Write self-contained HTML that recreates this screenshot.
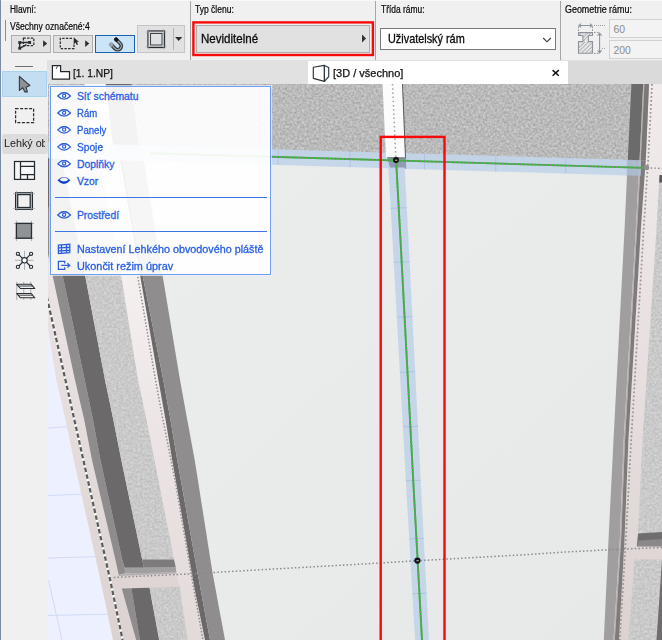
<!DOCTYPE html>
<html lang="cs">
<head>
<meta charset="utf-8">
<title>Lehký obvodový plášť – Typ členu</title>
<style>
html,body{margin:0;padding:0}
body{width:662px;height:640px;overflow:hidden;position:relative;background:#f0f0f0;font-family:"Liberation Sans",sans-serif;color:#1a1a1a}
.abs{position:absolute}
.t{position:absolute;white-space:nowrap;line-height:1;transform-origin:0 0}
.lbl{font-size:10px;color:#0a0a0a;-webkit-text-stroke:.22px #0a0a0a}
.sep{position:absolute;top:1px;height:59px;width:1px;background:#a6a6a6}
.btn{position:absolute;box-sizing:border-box;border:1px solid #adadad;background:#e1e1e1}
.pop{font-size:10.4px;color:#2a60e4;-webkit-text-stroke:.3px #2a60e4}
.tab{font-size:10.8px;color:#111;-webkit-text-stroke:.25px #111}
svg{position:absolute;overflow:visible}
</style>
</head>
<body>
<!-- ===== top info panel ===== -->
<div class="abs" id="panel" style="left:0;top:0;width:662px;height:60px;background:#f0f0f0"></div>
<div class="abs" style="left:0;top:0;width:662px;height:1px;background:#f8f8f8"></div>
<div class="abs" style="left:5px;top:20px;width:1px;height:21px;background:#8c8c8c"></div>

<span class="t lbl" style="left:10.3px;top:4.9px;transform:scaleX(0.834)">Hlavní:</span>
<span class="t lbl" style="left:10.3px;top:21.6px;transform:scaleX(0.858)">Všechny označené:4</span>

<div class="btn" style="left:11px;top:35px;width:40px;height:18px"></div>
<div class="btn" style="left:53px;top:35px;width:40px;height:18px"></div>
<div class="btn" style="left:95px;top:35px;width:40px;height:18px;border-color:#1b62b3;background:#cce4f7"></div>
<div class="btn" style="left:137px;top:25px;width:48px;height:28px;border-color:#c4c4c4"></div>
<div class="abs" style="left:173px;top:28px;width:1px;height:22px;background:#b4b4b4"></div>

<div class="sep" style="left:190px"></div>
<span class="t lbl" style="left:195.3px;top:4.9px;transform:scaleX(0.852)">Typ členu:</span>
<svg style="left:0;top:0" width="662" height="60" viewBox="0 0 662 60"><rect x="193.4" y="22.4" width="179.5" height="32.6" fill="none" stroke="#f80a0c" stroke-width="2.4"/></svg>
<div class="btn" style="left:196px;top:25px;width:174px;height:28px"></div>
<span class="t" style="left:200.5px;top:33.5px;font-size:11.9px;color:#0c0c0c;-webkit-text-stroke:.3px #0c0c0c;transform:scaleX(.971)">Neviditelné</span>

<div class="sep" style="left:375px"></div>
<span class="t lbl" style="left:380.5px;top:4.9px;transform:scaleX(0.843)">Třída rámu:</span>
<div class="abs" style="left:380px;top:28px;width:176px;height:22px;box-sizing:border-box;border:1px solid #7a7a7a;background:#fff"></div>
<span class="t" style="left:387.7px;top:33.5px;font-size:11.9px;color:#0c0c0c;-webkit-text-stroke:.3px #0c0c0c;transform:scaleX(.914)">Uživatelský rám</span>

<div class="sep" style="left:560px"></div>
<span class="t lbl" style="left:565.3px;top:4.9px;transform:scaleX(0.892)">Geometrie rámu:</span>
<div class="abs" style="left:609px;top:19px;width:60px;height:19px;box-sizing:border-box;border:1px solid #d2d2d2;background:#f3f3f3"></div>
<div class="abs" style="left:609px;top:40px;width:60px;height:19px;box-sizing:border-box;border:1px solid #d2d2d2;background:#f3f3f3"></div>
<span class="t" style="left:613.5px;top:25px;font-size:10.4px;color:#8a8a8a">60</span>
<span class="t" style="left:613.5px;top:45.9px;font-size:10.4px;color:#8a8a8a">200</span>

<!-- ===== tab bar ===== -->
<div class="abs" style="left:47px;top:60px;width:615px;height:24px;background:#e1e1e1"></div>
<div class="abs" style="left:568px;top:61px;width:94px;height:23px;background:#dadada"></div>
<div class="abs" style="left:308px;top:61px;width:260px;height:23px;background:#fff"></div>
<span class="t tab" style="left:72.6px;top:68.1px;transform:scaleX(.95)">[1. 1.NP]</span>
<span class="t tab" style="left:332.9px;top:68px;transform:scaleX(1.02)">[3D / všechno]</span>

<!-- ===== left toolbox ===== -->
<div class="abs" style="left:0;top:60px;width:47px;height:580px;background:#f0f0f0"></div>
<div class="abs" style="left:0;top:0;width:1px;height:640px;background:#7b8da6"></div>
<div class="abs" style="left:15px;top:66px;width:18px;height:1px;background:#6e6e6e"></div>
<div class="abs" style="left:2px;top:71px;width:45px;height:26px;box-sizing:border-box;background:#c3ddf3;border:1px solid #a9d1f0"></div>
<div class="abs" style="left:2px;top:134px;width:46px;height:20px;background:#dcdcdc;border-radius:3px"></div>
<div class="abs" style="left:2px;top:134px;width:43px;height:20px;overflow:hidden"><span class="t" style="left:1.6px;top:4.4px;font-size:11px;color:#1a1a1a;transform:scaleX(.976)">Lehký obvodový plášť</span></div>

<!-- ===== chrome icons ===== -->
<svg id="icons" style="left:0;top:0" width="662" height="640" viewBox="0 0 662 640">
<!-- button 1: polyline with dashed marquee -->
<g fill="none" stroke="#2b2f33">
<rect x="23.4" y="38.1" width="10.4" height="7.4" stroke-width="1.25" stroke-dasharray="2.4 1.3"/>
<path d="M19.7 48.3V42.5H29.7M19.7 48.3L26.6 44.6" stroke-width="1.4"/>
</g>
<g fill="#2b2f33"><rect x="18.3" y="41.1" width="2.9" height="2.9"/><rect x="28.2" y="41" width="2.9" height="2.9"/><rect x="18.3" y="46.8" width="2.9" height="2.9"/>
<path d="M43.1 40.2V47L47.2 43.6Z"/>
<path d="M85.2 40.2V47L89.3 43.6Z"/>
<path d="M73.7 37.3V44.2L75.6 42.7L76.8 45L78.1 44.4L77 42.1L79 41.9Z"/>
</g>
<!-- button 2: marquee + cursor -->
<path d="M72 38.4H60.3V48.5H74V44.5" fill="none" stroke="#2b2f33" stroke-width="1.25" stroke-dasharray="2.4 1.3"/>
<!-- button 3: magnet -->
<g transform="translate(116.4 44.8) rotate(-45) scale(1.1)">
<path d="M-3.3 -4.4V1.6A3.3 3.3 0 0 0 3.3 1.6V-4.4" fill="none" stroke="#363b40" stroke-width="3.4"/>
<path d="M-3.3 -1.6V1.6A3.3 3.3 0 0 0 3.3 1.6V-1.6" fill="none" stroke="#a9b9c7" stroke-width="1"/>
<rect x="-5" y="-5.4" width="3.4" height="3.8" rx="1" fill="#a0a4a8"/>
<rect x="1.6" y="-5.4" width="3.4" height="3.8" rx="1" fill="#14171a"/>
</g>
<!-- big button: frame icon + dropdown -->
<g fill="none" stroke="#20262b">
<rect x="148" y="31" width="16.5" height="16.5" stroke-width="1.25"/><rect x="150.6" y="33.5" width="11.4" height="11.5" stroke-width="0.85"/>
</g>
<path d="M148.6 28.9V49.6M163.7 28.9V49.6M145.6 32H166.6M145.6 46.6H166.6" stroke="#a4a8ab" stroke-width="0.6" fill="none"/>
<path d="M175.1 37.1H182.3L178.7 41Z" fill="#2b2f33"/>
<!-- Neviditelné arrow, combo chevron -->
<path d="M362 34.5V42.4L366.1 38.45Z" fill="#333"/>
<path d="M543.2 38L547 41.8L550.8 38" fill="none" stroke="#3a3a3a" stroke-width="1.15"/>
<!-- geometry icon -->
<g fill="none" stroke="#8e9499" stroke-width="1">
<path d="M579.2 25.5H591.8M581 23.6L578.9 25.5L581 27.4M590 23.6L592.1 25.5L590 27.4" stroke-width="1.1"/>
<path d="M594 25.5H605.2" stroke-dasharray="0.9 1.1"/>
<path d="M578.5 26.6V31M592.5 26.6V31" stroke-dasharray="1.6 1.2"/>
<path d="M578.5 32.6H592.5V35.5H588.4V41.6H592.5V53.3H578.5V41.6H582.9V35.5H578.5Z" fill="#e4e6e7" stroke-width="1.1"/>
<path d="M579 35.2L581.6 32.8M583.2 41.2L588.2 36M583.2 37.6L587.4 33M579 47.5L585 41.8M579 51.4L588.4 42M581.6 53L592.2 42.6M585.6 53L592.2 46.6M589.4 53L592.2 50.4M588.6 35.2L591 32.8" stroke-width="0.8"/>
<path d="M594 32.4H598.8M594 53.4H598.8" stroke-dasharray="1.7 1.2"/>
<path d="M599.6 33.6V52.4M597.6 35.6L599.6 33.2L601.6 35.6M597.6 50.4L599.6 52.8L601.6 50.4" stroke-width="1.1"/>
<path d="M602 48.4H605" stroke-dasharray="0.9 1.1"/>
</g>
<!-- tab icons -->
<path d="M52.4 65.6H60.6V71.6H69.5V79.2H52.4Z" fill="#fff" stroke="#20262b" stroke-width="1.2"/>
<path d="M56.2 68.8L57.4 66.4" stroke="#20262b" stroke-width="0.9" fill="none"/>
<g fill="#fff" stroke="#2b363d" stroke-width="1.15" stroke-linejoin="round">
<path d="M313.3 67.3L324.4 65.4V81.4L313.3 78.4Z"/><path d="M324.4 65.4L328.7 67.6V76.6L324.4 81.4Z"/>
</g>
<path d="M552.6 70.1L558.8 75.7M558.8 70.1L552.6 75.7" stroke="#111" stroke-width="1.5" fill="none"/>
<!-- toolbox icons -->
<path d="M19.4 76.4V90.4L22.7 87.7L24.9 91.9H27.4L26 87.2L29.9 85.5Z" fill="#8d9195" stroke="#353b40" stroke-width="1.1" stroke-linejoin="round"/>
<rect x="15.6" y="108.7" width="18" height="13.8" fill="none" stroke="#262d33" stroke-width="1.25" stroke-dasharray="3 1.5"/>
<g fill="none" stroke="#232b31" stroke-width="1.25">
<rect x="14.5" y="161.5" width="20" height="17.9" fill="#f7f7f7"/>
<path d="M20.5 161.5V179.4M20.5 166.4H34.5M20.5 174.6H34.5M27.5 174.6V179.4"/>
<rect x="15.6" y="192.8" width="16.8" height="16.5"/><rect x="17.7" y="194.6" width="12.5" height="12.9"/>
<path d="M15.6 192.8L17.7 194.6M32.4 192.8L30.2 194.6M15.6 209.3L17.7 207.5M32.4 209.3L30.2 207.5" stroke-width="0.8"/>
</g>
<path d="M16.5 190.8V211.2M31.5 190.8V211.2M13 193.6H35M13 208.5H35" stroke="#a0a4a7" stroke-width="0.6" fill="none"/>
<path d="M16.4 220.8V241M31.5 220.8V241M13.9 223.4H34M13.9 238.2H34" stroke="#8f9396" stroke-width="0.7" fill="none"/>
<rect x="16.4" y="223.4" width="15.1" height="14.8" fill="#8e9396" stroke="#262d33" stroke-width="1.3"/>
<path d="M15 260.3H33.4M24.5 250.9V269.9" stroke="#8f9396" stroke-width="0.7" fill="none"/>
<g fill="#f4f4f4" stroke="#262d33" stroke-width="1.1">
<path d="M18.8 254.7L30.2 266M30.2 254.7L18.8 266" fill="none"/>
<circle cx="24.5" cy="260.3" r="2.7" fill="#fff"/>
<circle cx="17.9" cy="253.8" r="1.6"/><circle cx="31.1" cy="253.8" r="1.6"/><circle cx="17.9" cy="266.9" r="1.6"/><circle cx="31.1" cy="266.9" r="1.6"/>
</g>
<path d="M16.7 281.8V300M23.75 281.8V300M30.8 281.8V300" stroke="#8f9396" stroke-width="0.7" fill="none"/>
<g fill="#f0f0f0" stroke="#262d33" stroke-width="1.1" stroke-linejoin="round">
<path d="M16.7 284.3H31.2L34.8 288.5H20.4Z"/><path d="M18.2 286H32.4" fill="none" stroke-width="0.9"/>
<path d="M16.7 293.5H31.2L34.8 297.8H20.4Z"/><path d="M18.2 295.2H32.4" fill="none" stroke-width="0.9"/>
</g>
</svg>
<!-- ===== 3D scene ===== -->
<!--SCENE-START-->
<svg id="scene" style="left:48px;top:84px" width="614" height="556" viewBox="48 84 614 556">
<defs>
<filter id="nz" x="0" y="0" width="100%" height="100%" color-interpolation-filters="sRGB">
<feTurbulence type="fractalNoise" baseFrequency="0.42" numOctaves="3" seed="7" result="n"/>
<feColorMatrix in="n" type="matrix" values="0.27 0 0 0 0.595  0.27 0 0 0 0.595  0.27 0 0 0 0.595  0 0 0 0 1" result="g"/>
<feComposite in="g" in2="SourceGraphic" operator="in"/>
</filter>
<filter id="nz2" x="0" y="0" width="100%" height="100%" color-interpolation-filters="sRGB">
<feTurbulence type="fractalNoise" baseFrequency="0.42" numOctaves="3" seed="11" result="n"/>
<feColorMatrix in="n" type="matrix" values="0.17 0 0 0 0.705  0.17 0 0 0 0.705  0.17 0 0 0 0.705  0 0 0 0 1" result="g"/>
<feComposite in="g" in2="SourceGraphic" operator="in"/>
</filter>
<linearGradient id="pk" gradientUnits="userSpaceOnUse" x1="0" y1="84" x2="0" y2="640">
<stop offset="0" stop-color="#f1ebeb"/><stop offset="0.45" stop-color="#e9e1e1"/><stop offset="1" stop-color="#dcd2d2"/>
</linearGradient>
<linearGradient id="pk2" gradientUnits="userSpaceOnUse" x1="0" y1="250" x2="0" y2="640">
<stop offset="0" stop-color="#f6f1f1"/><stop offset="0.5" stop-color="#ece4e4"/><stop offset="1" stop-color="#e3dada"/>
</linearGradient>
<linearGradient id="gl" x1="0" y1="0" x2="1" y2="1">
<stop offset="0" stop-color="#eceeed"/><stop offset="1" stop-color="#e7e9e8"/>
</linearGradient>
<clipPath id="cl"><rect x="48" y="84" width="614" height="556"/></clipPath>
</defs>
<g clip-path="url(#cl)">
<rect x="48" y="84" width="614" height="556" fill="url(#gl)"/>
<g filter="url(#nz)">
<polygon points="48.0,84.0 662.0,84.0 662.0,168.4 48.0,150.2" fill="#bdbdbd" />
</g>
<polygon points="84.6,84.0 105.7,84.0 113.8,152.0 92.8,152.0" fill="#fafafa" />
<polygon points="105.7,84.0 131.4,84.0 139.5,153.0 113.8,152.0" fill="#6a6a6a" />
<polygon points="48.0,290.0 39.1,290.0 48.5,332.0 56.4,380.0 65.6,420.0 73.8,460.0 87.2,520.0 95.9,559.5 99.1,573.8 102.3,588.8 106.8,610.0 113.0,640.0 48.0,640.0" fill="#edf1ff" />
<line x1="48" y1="428.0" x2="67.1" y2="426.7" stroke="#d0daf8" stroke-width="1"/>
<line x1="48" y1="495.5" x2="81.6" y2="494.2" stroke="#d0daf8" stroke-width="1"/>
<line x1="48" y1="558.0" x2="95.5" y2="556.7" stroke="#d0daf8" stroke-width="1"/>
<line x1="48" y1="615.5" x2="107.8" y2="614.2" stroke="#d0daf8" stroke-width="1"/>
<line x1="48.5" y1="580" x2="62" y2="640" stroke="#d0daf8" stroke-width="1"/>
<polygon points="7.9,150.0 19.0,200.0 35.8,275.0 48.5,332.0 56.4,380.0 65.6,420.0 73.8,460.0 87.2,520.0 95.9,559.5 99.1,573.8 102.3,588.8 106.8,610.0 113.0,640.0 188.8,640.0 183.6,610.0 180.0,588.8 176.9,573.8 174.0,559.5 166.3,520.0 154.5,460.0 146.5,420.0 138.0,380.0 130.2,332.0 121.0,275.0 107.3,200.0 98.1,150.0" fill="url(#pk)" />
<polygon points="98.1,150.0 107.3,200.0 121.0,275.0 130.2,332.0 138.0,380.0 146.5,420.0 154.5,460.0 166.3,520.0 174.0,559.5 176.9,573.8 180.0,588.8 183.6,610.0 188.8,640.0 205.0,640.0 198.9,610.0 194.6,588.8 191.9,573.8 189.4,559.5 182.6,520.0 172.2,460.0 165.6,420.0 158.4,380.0 150.0,332.0 140.0,275.0 126.9,200.0 118.2,150.0" fill="url(#pk2)" />
<polygon points="118.2,150.0 126.9,200.0 140.0,275.0 150.0,332.0 158.4,380.0 165.6,420.0 172.2,460.0 182.6,520.0 189.4,559.5 191.9,573.8 194.6,588.8 198.9,610.0 205.0,640.0 210.0,640.0 204.4,610.0 200.5,588.8 197.7,573.8 195.1,559.5 188.0,520.0 177.2,460.0 170.5,420.0 163.3,380.0 153.8,332.0 142.5,275.0 129.5,200.0 120.9,150.0" fill="#6a6868" />
<polygon points="120.9,150.0 129.5,200.0 142.5,275.0 153.8,332.0 163.3,380.0 170.5,420.0 177.2,460.0 188.0,520.0 195.1,559.5 197.7,573.8 200.5,588.8 204.4,610.0 210.0,640.0 225.0,640.0 219.4,610.0 215.5,588.8 212.7,573.8 210.4,559.5 204.2,520.0 194.7,460.0 187.3,420.0 180.0,380.0 172.0,332.0 162.5,275.0 150.2,200.0 142.1,150.0" fill="#8f8d8d" />
<polygon points="25.6,150.0 36.4,200.0 52.5,275.0 64.7,332.0 75.0,380.0 84.3,420.0 92.0,460.0 106.1,520.0 115.4,559.5 118.8,575.0 125.8,573.0 122.2,559.5 113.5,520.0 100.4,460.0 93.0,420.0 84.7,380.0 74.6,332.0 62.5,275.0 46.7,200.0 36.2,150.0" fill="#8e8c8c" />
<polygon points="36.2,150.0 46.7,200.0 62.5,275.0 74.6,332.0 84.7,380.0 93.0,420.0 100.4,460.0 113.5,520.0 122.2,559.5 124.6,567.8 143.9,567.8 142.2,559.5 133.9,520.0 121.3,460.0 113.4,420.0 105.0,380.0 95.9,332.0 85.0,275.0 70.0,200.0 60.0,150.0" fill="#6b6969" />
<g filter="url(#nz2)">
<polygon points="60.0,150.0 70.0,200.0 85.0,275.0 95.9,332.0 105.0,380.0 113.4,420.0 121.3,460.0 133.9,520.0 142.2,559.5 174.0,559.5 166.3,520.0 154.5,460.0 146.5,420.0 138.0,380.0 130.2,332.0 121.0,275.0 107.3,200.0 98.1,150.0" fill="#c3c3c3" />
</g>
<polygon points="142.2,559.4 174.0,559.4 175.8,567.5 143.9,567.8" fill="#7d7b7b" />
<polygon points="124.6,567.8 175.8,567.5 176.4,572.4 125.8,573.2" fill="#a19f9f" />
<polygon points="118.8,575.0 125.8,573.2 176.4,572.4 176.5,573.6 119.0,576.0" fill="#b5b0b0" />
<polygon points="121.8,588.5 131.4,588.2 139.9,640.0 136.2,640.0" fill="#8e8c8c" />
<polygon points="131.4,588.2 149.5,587.7 159.2,640.0 139.9,640.0" fill="#6b6969" />
<g filter="url(#nz2)">
<polygon points="149.5,587.7 179.8,586.8 187.0,640.0 159.2,640.0" fill="#c3c3c3" />
</g>
<polyline points="45.4,290.0 49.5,308.8 74.4,420.0 110.2,580.0 122.6,640.0" fill="none" stroke="#ffffff" stroke-width="2.2"/>
<polyline points="45.4,290.0 49.5,308.8 74.4,420.0 110.2,580.0 122.6,640.0" fill="none" stroke="#5a5a5a" stroke-width="2.2" stroke-dasharray="4.5 2.5"/>
<polyline points="115.6,150.0 137.5,275.0 155.5,380.0 163.0,420.0 175.0,480.0 191.2,573.8 203.0,640.0" fill="none" stroke="#928b8b" stroke-width="1.5" stroke-dasharray="1.5 1.8"/>
<polygon points="649.0,84.0 645.8,160.0 640.8,230.0 628.4,440.0 624.5,540.0 619.0,640.0 662.0,640.0 662.0,84.0" fill="url(#pk)" />
<polygon points="631.4,84.0 629.7,120.0 627.7,160.5 639.5,160.5 641.5,120.0 643.2,84.0" fill="#6c6b6b" />
<polygon points="627.7,160.5 624.5,230.0 613.5,440.0 608.5,540.0 603.8,640.0 613.5,640.0 619.8,540.0 623.7,440.0 635.8,230.0 639.5,160.5" fill="#a09e9e" />
<polygon points="643.2,84.0 641.5,120.0 639.5,160.5 635.8,230.0 623.7,440.0 619.8,540.0 613.5,640.0 614.8,640.0 621.1,540.0 625.0,440.0 637.0,230.0 640.8,160.5 642.8,120.0 644.5,84.0" fill="#b9b3b3" />
<polygon points="644.5,84.0 642.8,120.0 640.8,160.5 645.7,160.5 647.5,120.0 649.0,84.0" fill="#7b7777" />
<polygon points="640.8,160.5 637.0,230.0 625.0,440.0 621.1,540.0 614.8,640.0 619.0,640.0 624.5,540.0 628.4,440.0 640.8,230.0 645.7,160.5" fill="#7f7b7b" />
<g filter="url(#nz2)">
<polygon points="659.5,175.0 670.0,175.0 670.0,546.2 636.8,546.2 637.8,540.0 642.5,440.0 656.4,230.0" fill="#c3c3c3" />
<polygon points="634.6,559.5 670.0,559.5 670.0,640.0 628.4,640.0" fill="#c3c3c3" />
</g>
<polygon points="659.5,175.0 670.0,175.0 670.0,182.5 659.1,182.5" fill="#5c5a5a" />
<polygon points="638.1,533.4 670.0,531.5 670.0,546.2 636.8,546.2" fill="#6f6d6d" />
<polygon points="638.7,540.5 670.0,538.5 670.0,546.2 636.8,546.2" fill="#8a8888" />
<polygon points="662.0,560.0 670.0,560.0 670.0,640.0 656.5,640.0" fill="#6f6d6d" />
<polyline points="652.0,84.0 648.2,160.0 643.6,230.0 631.2,440.0 625.8,540.0 619.8,640.0" fill="none" stroke="#9a9292" stroke-width="1.7" stroke-dasharray="1.7 2.3"/>
<polygon points="48.0,142.6 627.0,159.8 627.0,175.4 48.0,158.2" fill="#c4d5e9" fill-opacity="0.93"/>
<polygon points="627.0,159.8 641.0,160.2 641.0,175.8 627.0,175.4" fill="#b4c8e2" fill-opacity="0.62"/>
<line x1="278.0" y1="149.4" x2="278.0" y2="165.0" stroke="#a9c2e6" stroke-width="0.9"/>
<line x1="350.0" y1="151.5" x2="350.0" y2="167.1" stroke="#a9c2e6" stroke-width="0.9"/>
<line x1="424.5" y1="153.7" x2="424.5" y2="169.3" stroke="#a9c2e6" stroke-width="0.9"/>
<line x1="495.8" y1="155.9" x2="495.8" y2="171.5" stroke="#a9c2e6" stroke-width="0.9"/>
<line x1="565.8" y1="157.9" x2="565.8" y2="173.5" stroke="#a9c2e6" stroke-width="0.9"/>
<line x1="627.0" y1="159.8" x2="627.0" y2="175.4" stroke="#a9c2e6" stroke-width="0.9"/>
<line x1="634.0" y1="160.0" x2="634.0" y2="175.6" stroke="#a9c2e6" stroke-width="0.9"/>
<polygon points="382.5,84.0 402.3,84.0 405.3,157.8 386.0,157.8" fill="#fbfbfb" />
<line x1="402.5" y1="84" x2="405.5" y2="157.8" stroke="#4a4a4a" stroke-width="0.9"/>
<line x1="392.5" y1="84" x2="395.75" y2="157.5" stroke="#a3a3a3" stroke-width="1.5" stroke-dasharray="1.5 2.7"/>
<polygon points="387.3,157.4 405.9,157.7 406.2,168.7 390.2,168.4" fill="#8f9cb1" />
<polygon points="387.3,157.2 405.9,157.5 405.9,158.6 387.6,158.3" fill="#6f6f6f" />
<polygon points="388.3,167.5 392.5,240.0 405.8,480.0 415.0,640.0 429.0,640.0 420.7,480.0 408.5,240.0 404.7,167.5" fill="#c4d5e9" fill-opacity="0.95"/>
<line x1="390.6" y1="208.3" x2="406.8" y2="207.7" stroke="#a9c2e6" stroke-width="0.9"/>
<line x1="393.7" y1="262.3" x2="409.6" y2="261.7" stroke="#a9c2e6" stroke-width="0.9"/>
<line x1="396.8" y1="317.3" x2="412.4" y2="316.7" stroke="#a9c2e6" stroke-width="0.9"/>
<line x1="399.8" y1="372.3" x2="415.2" y2="371.7" stroke="#a9c2e6" stroke-width="0.9"/>
<line x1="402.9" y1="426.8" x2="418.0" y2="426.2" stroke="#a9c2e6" stroke-width="0.9"/>
<line x1="405.9" y1="480.8" x2="420.7" y2="480.2" stroke="#a9c2e6" stroke-width="0.9"/>
<line x1="409.2" y1="539.0" x2="423.7" y2="538.4" stroke="#a9c2e6" stroke-width="0.9"/>
<line x1="412.3" y1="593.8" x2="426.6" y2="593.2" stroke="#a9c2e6" stroke-width="0.9"/>
<line x1="150.0" y1="153.2" x2="645.0" y2="167.9" stroke="#20c020" stroke-width="1.9"/>
<line x1="150.0" y1="153.2" x2="645.0" y2="167.9" stroke="#8b878b" stroke-width="1.9" stroke-dasharray="1.7 2"/>
<polyline points="396.1,160.5 396.5,167.5 400.5,240.0 413.2,480.0 422.0,640.0" fill="none" stroke="#20c020" stroke-width="1.9"/>
<polyline points="396.1,160.5 396.5,167.5 400.5,240.0 413.2,480.0 422.0,640.0" fill="none" stroke="#8b878b" stroke-width="1.9" stroke-dasharray="1.7 2"/>
<line x1="647" y1="167.9" x2="662" y2="168.4" stroke="#8e8888" stroke-width="1.3" stroke-dasharray="1.5 2.2"/>
<circle cx="646.6" cy="167.6" r="2.6" fill="#8f918f"/>
<polyline points="113.8,577.5 191.2,573.8 265.0,569.5 360.0,564.2 417.5,560.7 520.0,555.0 562.0,552.2 624.5,549.0 662.0,547.5" fill="none" stroke="#8a8a8a" stroke-width="1.5" stroke-dasharray="1.5 2.2"/>
<circle cx="396" cy="160" r="3" fill="#111"/>
<rect x="395" y="159.6" width="2.4" height="1.3" fill="#9a9a9a"/>
<circle cx="417.4" cy="560.6" r="3.1" fill="#111"/>
<rect x="416.4" y="560" width="2.4" height="1.3" fill="#9a9a9a"/>
<rect x="380.7" y="136.9" width="63.8" height="520" fill="none" stroke="#f80808" stroke-width="2.4"/>
</g>
</svg>
<!--SCENE-END-->

<!-- ===== context popup ===== -->
<div class="abs" id="popup" style="left:50px;top:86px;width:221px;height:189px;box-sizing:border-box;border:1px solid #6f9df2;background:rgba(255,255,255,.92);box-shadow:0 0 0 1px rgba(235,242,255,.7)"></div>
<span class="t pop" style="left:76.9px;top:91.6px">Síť schématu</span>
<span class="t pop" style="left:76.9px;top:109.2px;transform:scaleX(0.92)">Rám</span>
<span class="t pop" style="left:76.9px;top:126.2px;transform:scaleX(0.925)">Panely</span>
<span class="t pop" style="left:76.9px;top:143.1px;transform:scaleX(0.98)">Spoje</span>
<span class="t pop" style="left:76.9px;top:160.0px">Doplňky</span>
<span class="t pop" style="left:76.9px;top:176.9px">Vzor</span>
<div class="abs" style="left:55px;top:197px;width:212px;height:1px;background:#3f74e6"></div>
<span class="t pop" style="left:76.9px;top:211.0px">Prostředí</span>
<div class="abs" style="left:55px;top:231px;width:212px;height:1px;background:#3f74e6"></div>
<span class="t pop" style="left:76.9px;top:245.1px;transform:scaleX(1.038)">Nastavení Lehkého obvodového pláště</span>
<span class="t pop" style="left:76.9px;top:261.9px;transform:scaleX(1.047)">Ukončit režim úprav</span>

<!-- ===== popup icons ===== -->
<svg id="picons" style="left:0;top:0" width="662" height="640" viewBox="0 0 662 640">
<g transform="translate(64.1 96.0)" fill="none" stroke="#2a5cdc"><path d="M-6.4 0Q0 -6.6 6.4 0Q0 6.3 -6.4 0Z" stroke-width="1.2" stroke-linejoin="round"/><path d="M-4.6 -1.7Q0 -5.2 4.6 -1.7" stroke-width="1"/><circle cx="0" cy="-0.3" r="1.6" stroke-width="1.15"/></g>
<g transform="translate(64.1 113.0)" fill="none" stroke="#2a5cdc"><path d="M-6.4 0Q0 -6.6 6.4 0Q0 6.3 -6.4 0Z" stroke-width="1.2" stroke-linejoin="round"/><path d="M-4.6 -1.7Q0 -5.2 4.6 -1.7" stroke-width="1"/><circle cx="0" cy="-0.3" r="1.6" stroke-width="1.15"/></g>
<g transform="translate(64.1 129.9)" fill="none" stroke="#2a5cdc"><path d="M-6.4 0Q0 -6.6 6.4 0Q0 6.3 -6.4 0Z" stroke-width="1.2" stroke-linejoin="round"/><path d="M-4.6 -1.7Q0 -5.2 4.6 -1.7" stroke-width="1"/><circle cx="0" cy="-0.3" r="1.6" stroke-width="1.15"/></g>
<g transform="translate(64.1 146.9)" fill="none" stroke="#2a5cdc"><path d="M-6.4 0Q0 -6.6 6.4 0Q0 6.3 -6.4 0Z" stroke-width="1.2" stroke-linejoin="round"/><path d="M-4.6 -1.7Q0 -5.2 4.6 -1.7" stroke-width="1"/><circle cx="0" cy="-0.3" r="1.6" stroke-width="1.15"/></g>
<g transform="translate(64.1 163.8)" fill="none" stroke="#2a5cdc"><path d="M-6.4 0Q0 -6.6 6.4 0Q0 6.3 -6.4 0Z" stroke-width="1.2" stroke-linejoin="round"/><path d="M-4.6 -1.7Q0 -5.2 4.6 -1.7" stroke-width="1"/><circle cx="0" cy="-0.3" r="1.6" stroke-width="1.15"/></g>
<path d="M57.4 180.3Q64 173.6 70.4 180.3Q64 187.6 57.4 180.3ZM59.5 179.8Q64 175.4 68.5 179.8Q64 183.4 59.5 179.8Z" fill="#0d41c9" fill-rule="evenodd"/>
<g transform="translate(64.1 215.0)" fill="none" stroke="#2a5cdc"><path d="M-6.4 0Q0 -6.6 6.4 0Q0 6.3 -6.4 0Z" stroke-width="1.2" stroke-linejoin="round"/><path d="M-4.6 -1.7Q0 -5.2 4.6 -1.7" stroke-width="1"/><circle cx="0" cy="-0.3" r="1.6" stroke-width="1.15"/></g>
<g fill="none" stroke="#2a5cdc" stroke-width="1.25">
<path d="M58.4 245.1L69.8 244.1V252.7L58.4 253.6Z" fill="#dfe8fb"/>
<path d="M61.5 244.9V253.3M66.5 244.4V252.9M58.4 247.9L69.8 247.3M58.4 250.9L69.8 250.4"/>
<path d="M64.7 263.6V261.4H58.4V269.4H64.7V267.3"/>
<path d="M61.2 265.4H69.4M67.4 263.2L69.7 265.4L67.4 267.6"/>
</g>
</svg>
</body>
</html>
